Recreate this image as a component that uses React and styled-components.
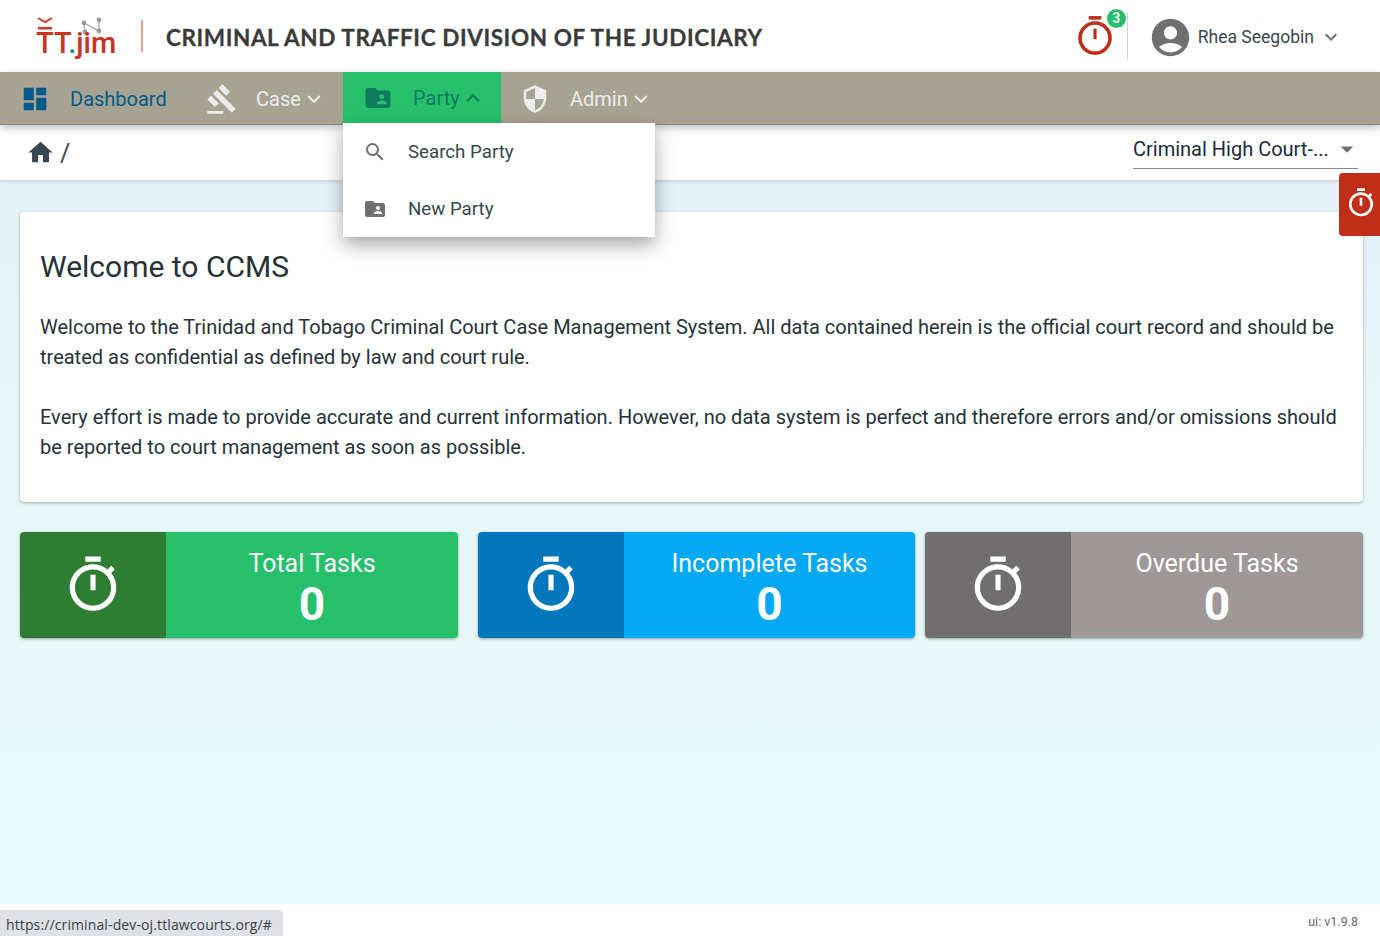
import React from 'react';
import styled, { createGlobalStyle } from 'styled-components';
import {
  MdDashboard, MdGavel, MdFolderShared, MdSecurity, MdSearch, MdHome,
  MdAccountCircle, MdKeyboardArrowDown, MdKeyboardArrowUp, MdArrowDropDown, MdOutlineTimer,
} from 'react-icons/md';

const GlobalStyle = createGlobalStyle`
  html, body { margin: 0; padding: 0; height: 100%; }
  body { font-family: Roboto, "Liberation Sans", sans-serif; color: #263238; overflow: hidden; }
  #root { height: 100%; }
`;

const TimerGlyph = ({ size, color, stroke = 3 }) => (
  <svg width={size} height={size} viewBox="0 0 36 40" fill="none">
    <rect x="12" y="1" width="12" height="3.4" fill={color} />
    <circle cx="18" cy="22" r={16 - stroke / 2} stroke={color} strokeWidth={stroke} />
    <rect x="16.5" y="13" width="3" height="10" fill={color} />
  </svg>
);

const App = () => {
  return (
    <Page>
      <GlobalStyle />
      <Header>
        <Logo>
          <LogoMark viewBox="0 0 90 42">
            <path d="M2 3l7 4 7-4" stroke="#d0392b" strokeWidth="2" fill="none" />
            <rect x="2" y="12" width="14" height="2.5" fill="#d0392b" />
            <path d="M49 17L48 8 63 16 63 5" stroke="#b3b3b3" strokeWidth="1.5" fill="none" />
            <circle cx="48" cy="8" r="2.4" fill="#9a9a9a" />
            <circle cx="63" cy="5" r="2.4" fill="#9a9a9a" />
            <circle cx="49" cy="17" r="2.4" fill="#9a9a9a" />
            <circle cx="63" cy="16" r="2.4" fill="#9a9a9a" />
          </LogoMark>
          <LogoText>TT<LogoDot>.</LogoDot>jim</LogoText>
        </Logo>
        <LogoDivider />
        <Division>CRIMINAL AND TRAFFIC DIVISION OF THE JUDICIARY</Division>
        <HeaderRight>
          <TimerAlert>
            <TimerGlyph size={42} color="#c02e1a" stroke={3.4} />
            <CountBadge>3</CountBadge>
          </TimerAlert>
          <HeaderDivider />
          <UserMenu>
            <MdAccountCircle size={45} color="#707070" />
            <UserName>Rhea Seegobin</UserName>
            <MdKeyboardArrowDown size={24} color="#707070" />
          </UserMenu>
        </HeaderRight>
      </Header>

      <NavBar>
        <NavItem $color="#045a8a" $width={186}>
          <NavIcon><MdDashboard size={30} color="#045a8a" /></NavIcon>
          Dashboard
        </NavItem>
        <NavItem $color="#ececec" $width={137}>
          <NavIcon><MdGavel size={32} color="#ececec" /></NavIcon>
          Case <MdKeyboardArrowDown size={26} />
        </NavItem>
        <NavItem $color="#0e7c5b" $active $width={158}>
          <NavIcon><MdFolderShared size={30} color="#0e7c5b" /></NavIcon>
          Party <MdKeyboardArrowUp size={26} />
        </NavItem>
        <NavItem $color="#ececec" $width={156}>
          <NavIcon><MdSecurity size={30} color="#ececec" /></NavIcon>
          Admin <MdKeyboardArrowDown size={26} />
        </NavItem>
      </NavBar>

      <Dropdown>
        <DropdownItem>
          <MdSearch size={24} color="#707070" />
          Search Party
        </DropdownItem>
        <DropdownItem>
          <MdFolderShared size={24} color="#707070" />
          New Party
        </DropdownItem>
      </Dropdown>

      <Crumbs>
        <CrumbTrail>
          <MdHome size={29} color="#37474f" />
          <Slash>/</Slash>
        </CrumbTrail>
        <CourtSelect>
          <span>Criminal High Court-...</span>
          <MdArrowDropDown size={30} color="#707070" />
        </CourtSelect>
      </Crumbs>

      <TimerTab>
        <MdOutlineTimer size={32} color="#fff" />
      </TimerTab>

      <Main>
        <WelcomeCard>
          <Title>Welcome to CCMS</Title>
          <Para>
            Welcome to the Trinidad and Tobago Criminal Court Case Management System. All data contained herein is the official court record and should be treated as confidential as defined by law and court rule.
          </Para>
          <Para>
            Every effort is made to provide accurate and current information. However, no data system is perfect and therefore errors and/or omissions should be reported to court management as soon as possible.
          </Para>
        </WelcomeCard>

        <Stats>
          <StatCard $gapAfter={10} $width={438}>
            <StatIcon $bg="#2e7d32"><MdOutlineTimer size={62} color="#fff" /></StatIcon>
            <StatBody $bg="#26c06d"><StatTitle>Total Tasks</StatTitle><StatValue>0</StatValue></StatBody>
          </StatCard>
          <StatCard $gapAfter={0} $width={437}>
            <StatIcon $bg="#0277bd"><MdOutlineTimer size={62} color="#fff" /></StatIcon>
            <StatBody $bg="#03a9f4"><StatTitle>Incomplete Tasks</StatTitle><StatValue>0</StatValue></StatBody>
          </StatCard>
          <StatCard $gapAfter={0} $width={438}>
            <StatIcon $bg="#706e6e"><MdOutlineTimer size={62} color="#fff" /></StatIcon>
            <StatBody $bg="#9e9898"><StatTitle>Overdue Tasks</StatTitle><StatValue>0</StatValue></StatBody>
          </StatCard>
        </Stats>
      </Main>

      <Footer>ui: v1.9.8</Footer>
      <StatusTip>https://criminal-dev-oj.ttlawcourts.org/#</StatusTip>
    </Page>
  );
};

const Page = styled.div`
  position: relative;
  display: flex;
  flex-direction: column;
  height: 936px;
  overflow: hidden;
  background: linear-gradient(180deg, #e4eff6 0%, #e6fdfb 100%);
`;

const Header = styled.header`
  display: flex;
  align-items: center;
  height: 72px;
  box-sizing: border-box;
  padding: 2px 37px 0 36px;
  background: #fff;
`;

const Logo = styled.div`
  position: relative;
  width: 82px;
  height: 42px;
  margin-top: -3px;
`;

const LogoMark = styled.svg`
  position: absolute;
  left: 0;
  top: 0;
  width: 90px;
  height: 42px;
`;

const LogoText = styled.div`
  position: absolute;
  left: 0;
  bottom: -4px;
  font-size: 29px;
  font-weight: 500;
  line-height: 36px;
  white-space: nowrap;
  color: #c8341f;
`;

const LogoDot = styled.span`
  color: #1f78b4;
`;

const LogoDivider = styled.div`
  width: 2px;
  height: 32px;
  margin: -3px 0 0 23px;
  background: #e8a191;
`;

const Division = styled.div`
  margin: 1px 0 0 23px;
  font-family: Lato, sans-serif;
  font-weight: 700;
  font-size: 22.5px;
  letter-spacing: 0.6px;
  -webkit-text-stroke: 0.3px #3b3b3b;
  color: #3b3b3b;
  white-space: nowrap;
`;

const HeaderRight = styled.div`
  display: flex;
  align-items: center;
  margin-left: auto;
`;

const TimerAlert = styled.div`
  position: relative;
  display: flex;
  margin-top: -2px;
`;

const CountBadge = styled.span`
  position: absolute;
  top: -6px;
  right: -10px;
  width: 19px;
  height: 19px;
  border-radius: 50%;
  background: #26c06d;
  color: #fff;
  font-size: 14px;
  font-weight: 500;
  line-height: 19px;
  text-align: center;
`;

const HeaderDivider = styled.div`
  width: 1px;
  height: 48px;
  margin-left: 11px;
  margin-top: -2px;
  background: #d0d0d0;
`;

const UserMenu = styled.div`
  display: flex;
  align-items: center;
  margin-left: 20px;
`;

const UserName = styled.span`
  margin: 0 5px 0 5px;
  font-size: 17.55px;
  color: #37474f;
`;

const NavBar = styled.nav`
  position: relative;
  z-index: 3;
  display: flex;
  height: 52px;
  padding-left: 20px;
  background: #a6a393;
  border-bottom: 1px solid #8f8d70;
  box-shadow: 0 3px 8px rgba(0, 0, 0, 0.25);
`;

const NavItem = styled.div`
  display: flex;
  align-items: center;
  width: ${(p) => p.$width}px;
  height: ${(p) => (p.$active ? 51 : 52)}px;
  padding: 1px 0 0 ${(p) => (p.$active ? 20 : 0)}px;
  box-sizing: border-box;
  font-size: 20px;
  color: ${(p) => p.$color};
  background: ${(p) => (p.$active ? '#26c06d' : 'transparent')};
  margin-right: ${(p) => (p.$active ? 19 : 0)}px;
`;

const NavIcon = styled.span`
  display: flex;
  width: 50px;
`;

const Dropdown = styled.div`
  position: absolute;
  z-index: 4;
  left: 343px;
  top: 123px;
  width: 312px;
  height: 114px;
  background: #fff;
  box-shadow: 0 8px 18px rgba(0, 0, 0, 0.35);
`;

const DropdownItem = styled.div`
  display: flex;
  align-items: center;
  gap: 21px;
  height: 57px;
  padding-left: 20px;
  font-size: 18.7px;
  color: #37474f;
`;

const Crumbs = styled.div`
  position: relative;
  z-index: 2;
  display: flex;
  align-items: center;
  justify-content: space-between;
  height: 55px;
  padding: 0 22px 0 26px;
  background: #fff;
  box-shadow: 0 1px 4px rgba(0, 0, 0, 0.15);
`;

const CrumbTrail = styled.div`
  display: flex;
  align-items: center;
  gap: 5px;
`;

const Slash = styled.span`
  padding-top: 1px;
  font-size: 25px;
  color: #37474f;
`;

const CourtSelect = styled.div`
  display: flex;
  align-items: center;
  justify-content: space-between;
  width: 225px;
  height: 38px;
  margin-top: -6px;
  box-sizing: border-box;
  border-bottom: 1px solid #8a8a8a;
  font-size: 20px;
  color: #1a2a3a;
  white-space: nowrap;

  svg {
    margin-right: -4px;
  }
`;

const TimerTab = styled.div`
  position: absolute;
  z-index: 5;
  right: 0;
  top: 173px;
  display: flex;
  align-items: center;
  justify-content: center;
  width: 41px;
  height: 63px;
  box-sizing: border-box;
  padding: 0 0 4px 2px;
  border-radius: 4px 0 0 4px;
  background: #c02e1a;
`;

const Main = styled.main`
  flex: 1;
  padding: 32px 17px 0 20px;
`;

const WelcomeCard = styled.section`
  height: 290px;
  box-sizing: border-box;
  padding: 35px 20px 20px;
  background: #fff;
  border-radius: 4px;
  box-shadow: 0 1px 3px rgba(0, 0, 0, 0.3);
`;

const Title = styled.h2`
  margin: 0 0 25px;
  font-size: 30px;
  font-weight: 400;
  line-height: 40px;
  color: #263238;
`;

const Para = styled.p`
  margin: 0 0 30px;
  font-size: 20px;
  line-height: 30px;
  color: #263238;
`;

const Stats = styled.div`
  display: flex;
  margin-top: 30px;
  gap: 10px;
`;

const StatCard = styled.div`
  display: flex;
  width: ${(p) => p.$width}px;
  height: 106px;
  margin-right: ${(p) => p.$gapAfter}px;
  border-radius: 4px;
  overflow: hidden;
  box-shadow: 0 1px 3px rgba(0, 0, 0, 0.35);
`;

const StatIcon = styled.div`
  display: flex;
  align-items: center;
  justify-content: center;
  width: 146px;
  background: ${(p) => p.$bg};
`;

const StatBody = styled.div`
  flex: 1;
  display: flex;
  flex-direction: column;
  align-items: center;
  padding-top: 16px;
  color: #fff;
  background: ${(p) => p.$bg};
`;

const StatTitle = styled.div`
  font-size: 25px;
  line-height: 32px;
`;

const StatValue = styled.div`
  font-size: 46px;
  font-weight: 700;
  line-height: 48px;
`;

const Footer = styled.footer`
  display: flex;
  justify-content: flex-end;
  height: 32px;
  padding: 10px 22px 0 0;
  box-sizing: border-box;
  background: #fff;
  font-size: 12.5px;
  color: #666;
`;

const StatusTip = styled.div`
  position: absolute;
  left: 0;
  bottom: 0;
  width: 283px;
  height: 26px;
  box-sizing: border-box;
  padding: 6px 0 0 6px;
  border-radius: 0 4px 0 0;
  background: #dee1e6;
  font-family: "Open Sans", sans-serif;
  font-size: 14px;
  letter-spacing: 0.12px;
  line-height: 18px;
  color: #3c4043;
  white-space: nowrap;
`;

export default App;
